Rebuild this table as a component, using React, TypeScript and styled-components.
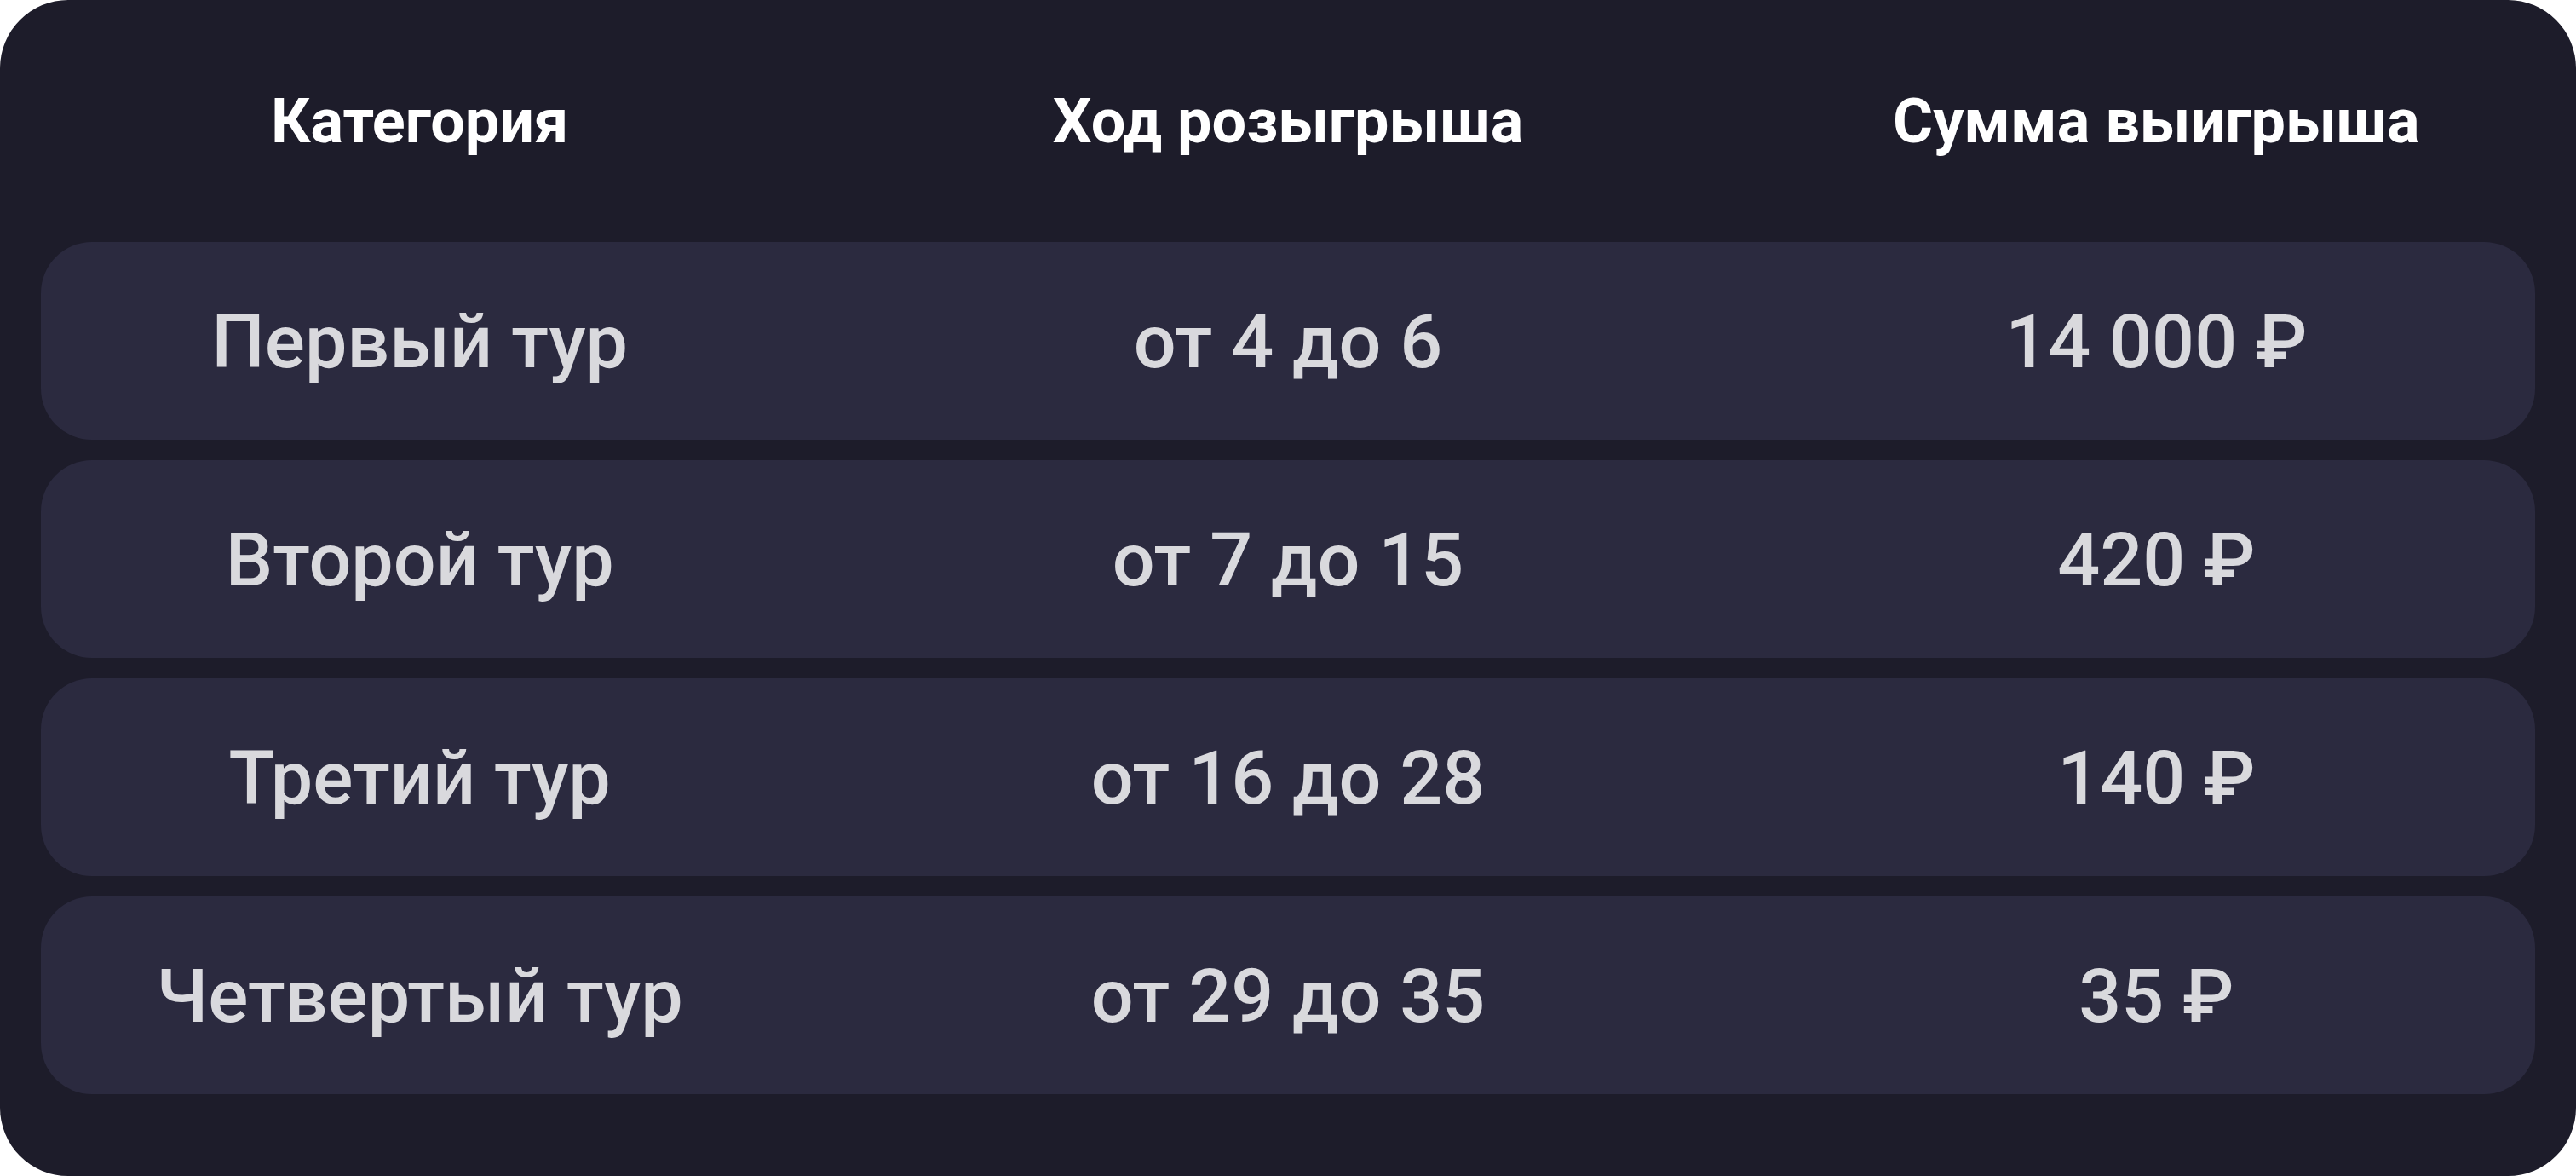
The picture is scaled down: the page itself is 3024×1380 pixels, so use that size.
import React from "react";
import styled, { createGlobalStyle } from "styled-components";

const Global = createGlobalStyle`
  html, body { margin: 0; padding: 0; background: #ffffff; }
  body { font-family: Roboto, "Noto Sans", "Liberation Sans", sans-serif; }
  * { box-sizing: border-box; }
`;

const Card = styled.div`
  width: 3024px;
  height: 1380px;
  background: #1d1c2a;
  border-radius: 80px;
  padding: 0 48px 96px;
  display: flex;
  flex-direction: column;
  gap: 24px;
`;

const Grid = styled.div`
  display: grid;
  grid-template-columns: repeat(3, 1fr);
  column-gap: 130px;
  align-items: center;
  justify-items: center;
`;

const HeaderRow = styled(Grid)`
  height: 260px;
  padding-top: 24px;
`;

const HeadCell = styled.div`
  font-family: Roboto, "Liberation Sans", sans-serif;
  font-size: 72px;
  font-weight: 700;
  color: #ffffff;
  white-space: nowrap;
`;

const Body = styled.div`
  display: flex;
  flex-direction: column;
  gap: 24px;
`;

const Row = styled(Grid)`
  height: 232px;
  background: #2b2a3f;
  border-radius: 60px;
`;

const Cell = styled.div`
  font-family: Roboto, "Liberation Sans", sans-serif;
  font-size: 88px;
  font-weight: 500;
  color: #d9d9dd;
  white-space: nowrap;
`;

const rows = [
  ["Первый тур", "от 4 до 6", "14 000 ₽"],
  ["Второй тур", "от 7 до 15", "420 ₽"],
  ["Третий тур", "от 16 до 28", "140 ₽"],
  ["Четвертый тур", "от 29 до 35", "35 ₽"],
];

export default function App() {
  return (
    <>
      <Global />
      <Card>
        <HeaderRow>
          <HeadCell>Категория</HeadCell>
          <HeadCell>Ход розыгрыша</HeadCell>
          <HeadCell>Сумма выигрыша</HeadCell>
        </HeaderRow>
        <Body>
          {rows.map((r) => (
            <Row key={r[0]}>
              {r.map((c) => (
                <Cell key={c}>{c}</Cell>
              ))}
            </Row>
          ))}
        </Body>
      </Card>
    </>
  );
}
